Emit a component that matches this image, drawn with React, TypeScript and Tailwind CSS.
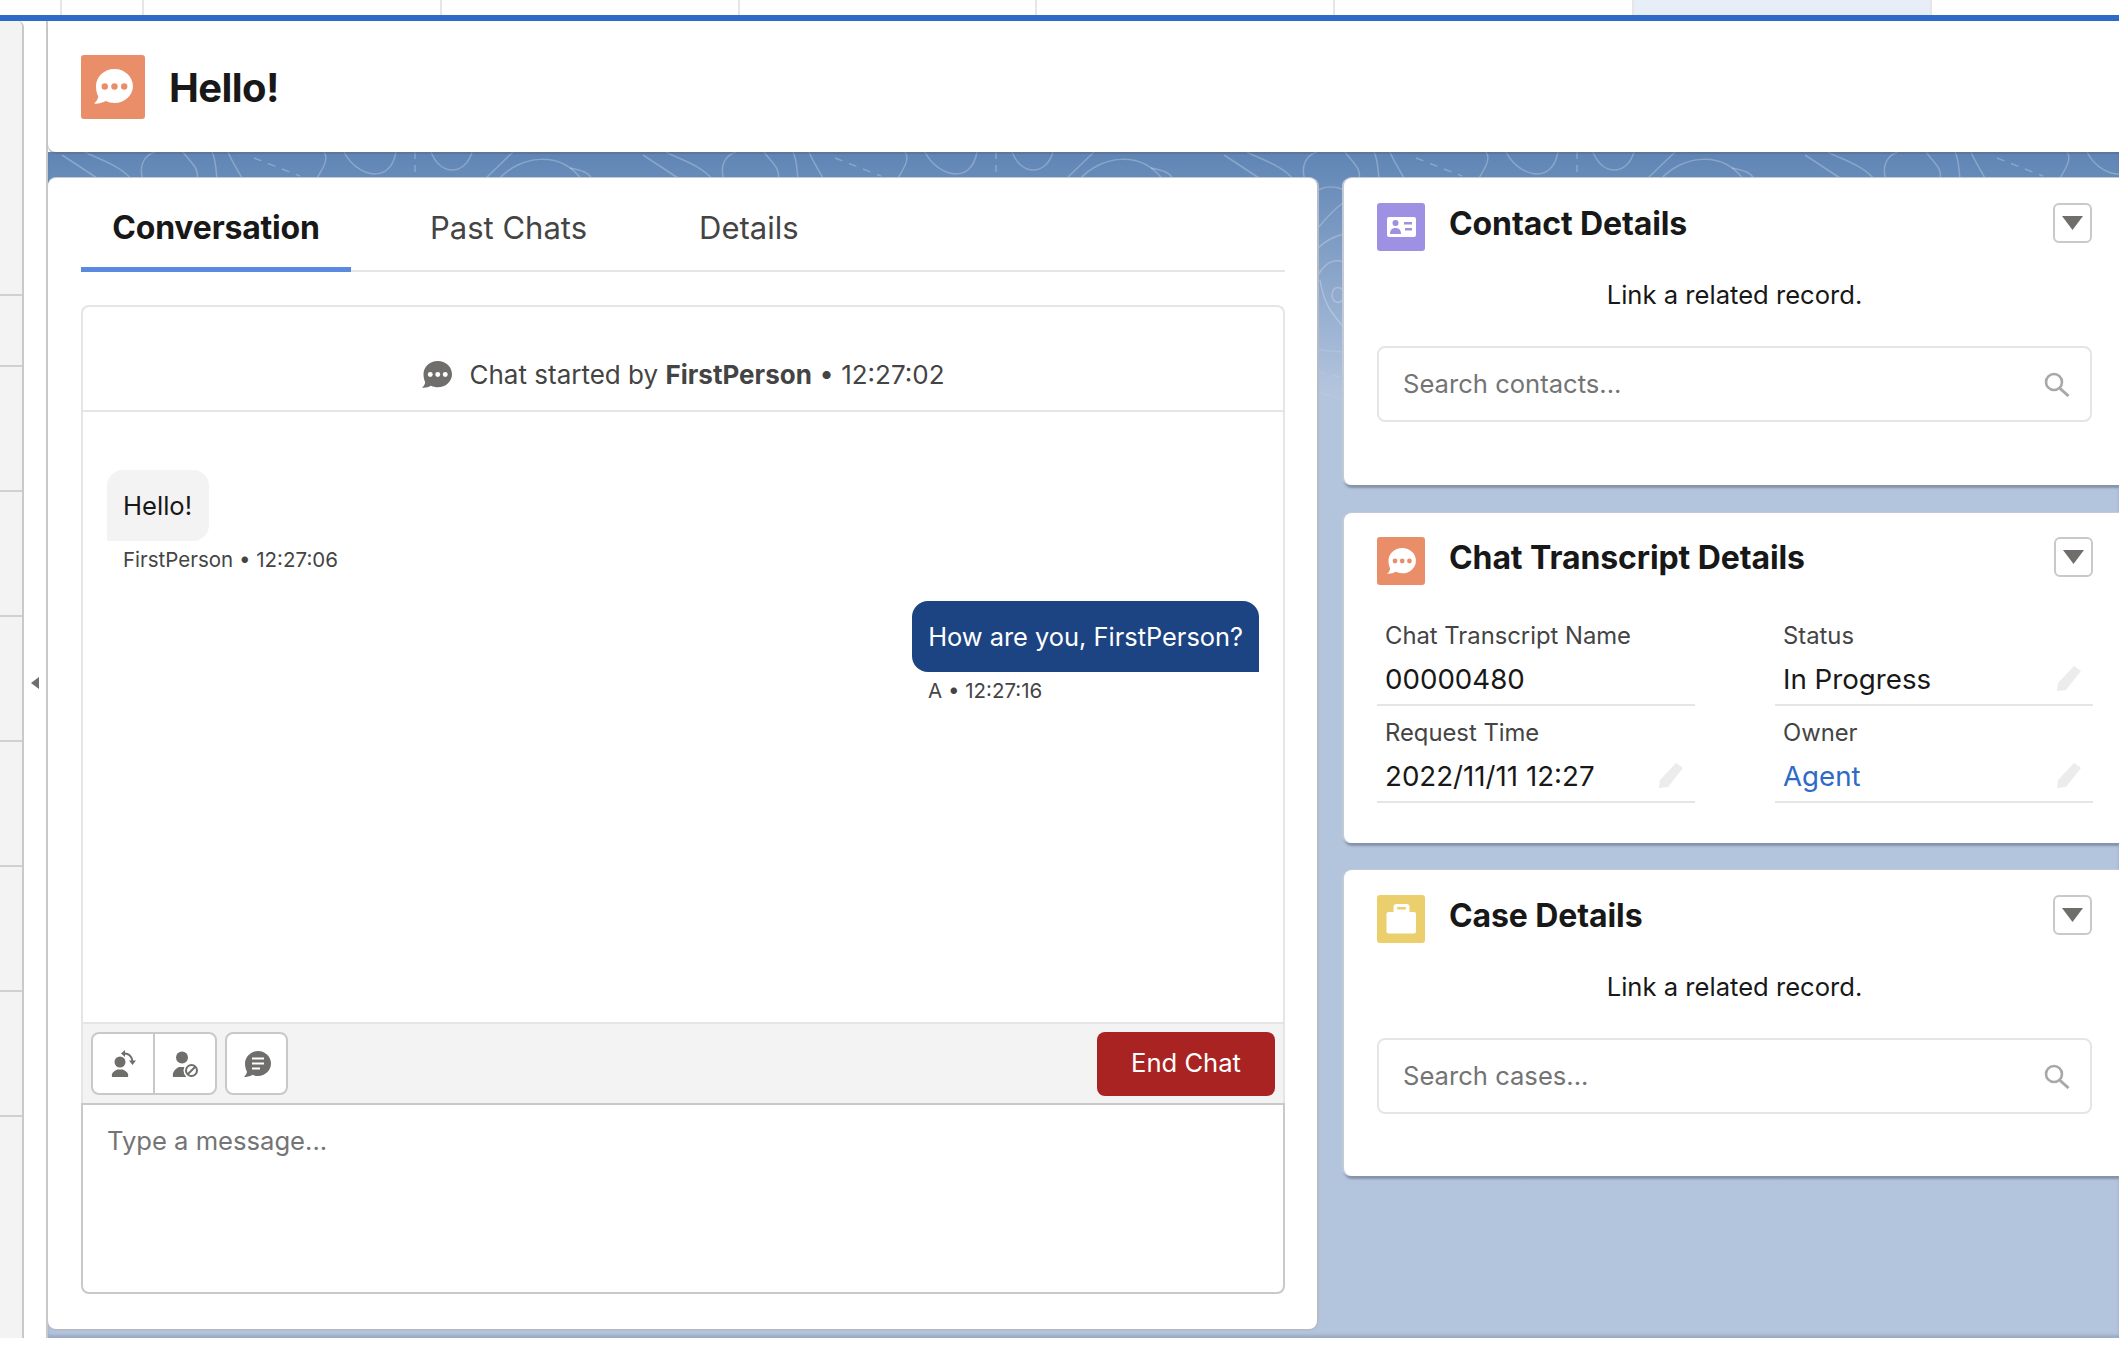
import React from 'react';

const topTabs = [
  'w-[62px]',
  'w-[82px]',
  'w-[298px]',
  'w-[298px]',
  'w-[297px]',
  'w-[298px]',
  'w-[299px]',
  'w-[298px] bg-[#e8eef8]',
];

const sideRows = ['h-[275px]', 'h-[71px]', 'h-[125px]', 'h-[125px]', 'h-[125px]', 'h-[125px]', 'h-[125px]', 'h-[125px]'];

const ChatBubble = ({ fill, dots, className }: { fill: string; dots: string; className: string }) => (
  <svg viewBox="0 0 40 36" className={className}>
    <path d="M21 0C31.500 0 40 7.800 40 17.500S31.500 35 21 35c-3.300 0-6.300-.7-9-2-3 1.800-7.500 3-12 2.600 2.300-1.700 4-4.400 4.300-7.200C2.800 25.300 2 21.500 2 17.500 2 7.800 10.500 0 21 0z" fill={fill} />
    <circle cx="11" cy="18" r="3.300" fill={dots} />
    <circle cx="21" cy="18" r="3.300" fill={dots} />
    <circle cx="31" cy="18" r="3.300" fill={dots} />
  </svg>
);

const ContactIcon = () => (
  <svg viewBox="0 0 48 48" className="w-12 h-12 shrink-0">
    <rect width="48" height="48" rx="3" fill="#9e90e2" />
    <rect x="10" y="14" width="29" height="20" rx="2" fill="#fff" />
    <circle cx="18.500" cy="20" r="3" fill="#9e90e2" />
    <path d="M13 31c0-4 2-6 5.500-6s5.500 2 5.500 6z" fill="#9e90e2" />
    <rect x="27" y="19" width="8" height="2.500" fill="#9e90e2" />
    <rect x="28" y="25" width="7" height="2.500" fill="#9e90e2" />
  </svg>
);

const CaseIcon = () => (
  <svg viewBox="0 0 48 48" className="w-12 h-12 shrink-0">
    <rect width="48" height="48" rx="3" fill="#ebcf6c" />
    <rect x="9.500" y="17" width="29.500" height="21.500" rx="2" fill="#fff" />
    <path d="M16.500 17v-5a3 3 0 0 1 3-3h10a3 3 0 0 1 3 3v5z" fill="#fff" />
    <rect x="20" y="12" width="9" height="2.500" rx="1" fill="#ebcf6c" />
  </svg>
);

const ChatTile = ({ big }: { big?: boolean }) => (
  <div className={`${big ? 'w-16 h-16' : 'w-12 h-12'} shrink-0 rounded-[3px] bg-[#e98e69] flex items-center justify-center`}>
    <ChatBubble fill="#fff" dots="#e98e69" className={big ? 'w-[39px] h-[35px]' : 'w-[29px] h-[26px]'} />
  </div>
);

const Pencil = () => (
  <svg viewBox="0 0 28 26" className="w-7 h-[26px] shrink-0 mr-[3px] -mt-[2px]">
    <path d="M20 1l7 5-15 19-9 1 1-8z" fill="#ececec" />
  </svg>
);

const SearchGlyph = () => (
  <svg viewBox="0 0 26 25" fill="none" className="w-[26px] h-[25px]">
    <circle cx="10" cy="10" r="8" stroke="#a8a8a8" strokeWidth="2.600" />
    <path d="M15.500 16l9 8" stroke="#a8a8a8" strokeWidth="3" />
  </svg>
);

const CaretButton = () => (
  <button className="w-[39px] h-10 shrink-0 rounded-md border-2 border-[#c9c9c9] bg-white flex items-center justify-center">
    <svg viewBox="0 0 21 14" className="w-[21px] h-[14px]">
      <path d="M0 0h21L10.500 14z" fill="#706e6b" />
    </svg>
  </button>
);

const CardHeader = ({ icon, title }: { icon: React.ReactNode; title: string }) => (
  <div className="flex items-start">
    {icon}
    <h2 className="ml-6 flex-1 pt-[1px] text-[32px] leading-[40px] font-bold text-[#181818] tracking-[-0.1px]">{title}</h2>
    <CaretButton />
  </div>
);

const LinkRecord = ({ placeholder }: { placeholder: string }) => (
  <>
    <p className="mt-6 h-10 text-center text-[25.600px] leading-10 text-[#181818]">Link a related record.</p>
    <div className="mt-[31px] h-[76px] rounded-lg border-2 border-[#e5e5e5] flex items-center justify-between pl-6 pr-5">
      <span className="text-[25.600px] text-[#747474]">{placeholder}</span>
      <SearchGlyph />
    </div>
  </>
);

const Field = ({ label, value, link, editable }: { label: string; value: string; link?: boolean; editable?: boolean }) => (
  <div className="h-[97px] border-b-2 border-[#e5e5e5] px-2 flex flex-col justify-end pb-[7px]">
    <div className="text-[23.800px] leading-8 text-[#444]">{label}</div>
    <div className="mt-[9px] flex items-center justify-between">
      <span className={`text-[27.700px] leading-9 ${link ? 'text-[#2e6bc4]' : 'text-[#181818]'}`}>{value}</span>
      {editable && <Pencil />}
    </div>
  </div>
);

// contour lines behind the cards, one tile of the strip
const contour = [
  'M62 155 L100 180',
  'M85 152 C100 160 120 165 132 180',
  'M143 180 C138 165 145 155 155 152',
  'M183 152 C190 162 200 168 197 180',
  'M212 152 C216 160 216 170 217 180',
  'M228 152 C232 162 238 170 243 180',
  'M324 152 C330 160 320 172 316 180',
  'M344 152 C356 176 390 186 396 152',
  'M431 152 C440 176 465 176 472 152',
  'M484 180 L513 152',
  'M498 180 C520 155 560 150 582 180',
  'M570 168 C580 170 590 172 592 180',
];

const Backdrop = () => (
  <svg className="absolute inset-0 w-full h-full" viewBox="0 0 2071 1186" preserveAspectRatio="none">
    <g transform="translate(-48 -152)" fill="none" stroke="#fff" strokeOpacity="0.25" strokeWidth="1.500">
      {[0, 581, 1162, 1743].map((dx) => (
        <g key={dx} transform={`translate(${dx} 0)`}>
          {contour.map((d) => (
            <path key={d} d={d} />
          ))}
          <path d="M254 158 L300 176" strokeDasharray="8 7" />
          <path d="M415 152 L415 180" strokeDasharray="7 6" />
        </g>
      ))}
      <path d="M1318 190 C1326 186 1336 186 1344 190" />
      <path d="M1318 228 C1326 218 1336 208 1344 202" />
      <path d="M1318 248 C1326 240 1336 236 1344 234" />
      <path d="M1318 275 C1328 258 1338 260 1344 262" />
      <path d="M1332 295 C1332 285 1344 285 1344 295 C1344 305 1332 305 1332 295z" />
      <path d="M1320 280 C1325 310 1335 315 1344 328" />
      <path d="M1318 350 L1344 352" strokeOpacity="0.12" />
      <path d="M1318 372 L1344 378" strokeOpacity="0.1" strokeDasharray="8 6" />
      <path d="M1318 392 L1344 400" strokeOpacity="0.08" />
    </g>
  </svg>
);

const ToolButtons = () => (
  <div className="flex gap-2">
    <div className="flex h-[63px] rounded-lg border-2 border-[#c9c9c9] bg-white">
      <button className="w-[62px] flex items-center justify-center border-r-2 border-[#c9c9c9]">
        <svg viewBox="0 0 28 28" className="w-7 h-7">
          <circle cx="11" cy="12" r="5.500" fill="#706e6b" />
          <path d="M3 27c-1-4 2-6 5.500-7.500h5c3.500 1.500 6.500 3.500 5.500 7.500z" fill="#706e6b" />
          <path d="M15 3.500C19 3 23 6 23.500 11" fill="none" stroke="#706e6b" strokeWidth="2" />
          <path d="M16 0l-4 3.500 4 3.500zM20 10.500h7l-3.500 4.500z" fill="#706e6b" />
        </svg>
      </button>
      <button className="w-[60px] flex items-center justify-center">
        <svg viewBox="0 0 28 28" className="w-7 h-7">
          <circle cx="11" cy="7.500" r="6" fill="#706e6b" />
          <path d="M2 27c-1-5 2-8 6-10h6c2 1 3 2 4 3l-3 7z" fill="#706e6b" />
          <circle cx="20.500" cy="20.500" r="8" fill="#fff" />
          <circle cx="20.500" cy="20.500" r="5.500" fill="none" stroke="#706e6b" strokeWidth="2" />
          <path d="M24.500 16.500l-8 8" stroke="#706e6b" strokeWidth="2" />
        </svg>
      </button>
    </div>
    <button className="w-[63px] h-[63px] rounded-lg border-2 border-[#c9c9c9] bg-white flex items-center justify-center">
      <svg viewBox="0 0 28 28" className="w-7 h-7">
        <path d="M15 1c7.200 0 13 5.600 13 12.500S22.200 26 15 26c-2 0-3.800-.4-5.500-1.200C7.500 26.300 4 27.300 1 27c1.500-1.300 2.700-3.300 3-5.200C2.800 19.500 2 16.600 2 13.500 2 6.600 7.800 1 15 1z" fill="#706e6b" />
        <path d="M9 8.500h12M9 13.500h12M9 18.500h8" stroke="#fff" strokeWidth="2" />
      </svg>
    </button>
  </div>
);

export default function App() {
  return (
    <div className="w-full h-screen overflow-hidden bg-white font-['Inter',sans-serif] flex flex-col">
      {/* browser style tab strip */}
      <div className="h-[15px] flex shrink-0">
        {topTabs.map((cls, i) => (
          <div key={i} className={`${cls} h-full border-r-2 border-[#e6e6e6]`} />
        ))}
      </div>
      <div className="h-[6px] bg-[#2e6bc6] shrink-0" />

      <div className="flex flex-1 min-h-0 pb-2">
        <aside className="w-6 shrink-0 bg-[#f3f3f3] border-r-2 border-[#c9c9c9] rounded-tr-md">
          {sideRows.map((h, i) => (
            <div key={i} className={`${h} border-b-2 border-[#d0d0d0]`} />
          ))}
        </aside>

        <div className="w-[22px] shrink-0 flex items-center justify-center pt-[6px]">
          <div className="w-0 h-0 border-y-[6px] border-y-transparent border-r-[8px] border-r-[#706e6b]" />
        </div>

        <main className="flex-1 min-w-0 border-l-2 border-[#c9c9c9] flex flex-col">
          <header className="h-[131px] shrink-0 bg-white rounded-bl-lg rounded-tl-lg flex items-center pl-[33px] shadow-[0_2px_1px_rgba(90,100,120,0.45)] relative z-10">
            <ChatTile big />
            <h1 className="ml-[24px] pt-[2px] text-[40px] font-bold text-[#181818] tracking-[-0.6px]">Hello!</h1>
          </header>

          <div className="relative flex-1 min-h-0 bg-gradient-to-b from-[#5f85b5] to-[#b3c4dd] to-20% pt-[26px] flex gap-[27px] shadow-[inset_0_-3px_3px_rgba(70,80,100,0.22)]">
            <Backdrop />

            {/* conversation card */}
            <section className="relative w-[1269px] h-[1151px] shrink-0 bg-white rounded-b-lg rounded-t-lg pl-[33px] pr-[32px] pb-[35px] flex flex-col shadow-[0_-1px_0_#c3cad6,0_2px_0_#b5bcc8,2px_0_0_#b5bcc8]">
              <nav className="h-[94px] shrink-0 flex border-b-2 border-[#e5e5e5]">
                <div className="w-[270px] h-[94px] border-b-[5px] border-[#5a8ae0] flex items-center justify-center pt-[10px]">
                  <span className="text-[32px] font-bold text-[#181818] tracking-[-0.2px]">Conversation</span>
                </div>
                <span className="ml-[79px] self-center pt-[8px] text-[31px] text-[#444]">Past Chats</span>
                <span className="ml-[112px] self-center pt-[8px] text-[31px] text-[#444]">Details</span>
              </nav>

              <div className="mt-[33px] flex-1 min-h-0 flex flex-col">
                <div className="flex-1 min-h-0 flex flex-col border-x-2 border-t-2 border-[#e5e5e5] rounded-t-lg">
                  <div className="h-[105px] shrink-0 border-b-2 border-[#e5e5e5] flex items-center justify-center pt-[32px] text-[26px] text-[#444]">
                    <ChatBubble fill="#706e6b" dots="#fff" className="w-[30px] h-[27px] mr-[18px]" />
                    <span>
                      Chat started by <b className="font-bold">FirstPerson</b> • 12:27:02
                    </span>
                  </div>

                  <div className="flex-1 min-h-0 pt-[58px] px-6 flex flex-col">
                    <div className="self-start w-[102px] h-[71px] bg-[#f3f3f3] rounded-2xl rounded-bl-none flex items-center pl-4 pt-[2px] text-[25.600px] text-[#181818]">
                      Hello!
                    </div>
                    <div className="ml-4 mt-[6px] h-[26px] text-[20.500px] leading-[26px] text-[#444]">FirstPerson • 12:27:06</div>
                    <div className="mt-7 self-end h-[71px] bg-[#1c4482] rounded-2xl rounded-br-none flex items-center px-4 pt-[2px] text-[25.400px] text-white">
                      How are you, FirstPerson?
                    </div>
                    <div className="self-start ml-[821px] mt-[6px] h-[26px] text-[20.500px] leading-[26px] text-[#444]">A • 12:27:16</div>
                  </div>

                  <div className="h-[81px] shrink-0 bg-[#f3f3f3] border-t-2 border-[#e5e5e5] flex items-center justify-between px-2">
                    <ToolButtons />
                    <button className="w-[178px] h-16 rounded-lg bg-[#a92322] text-white text-[25.600px]">End Chat</button>
                  </div>
                </div>

                <div className="h-[191px] shrink-0 border-2 border-[#c9c9c9] rounded-b-lg px-6 pt-[17px] text-[25.600px] text-[#747474]">
                  Type a message...
                </div>
              </div>
            </section>

            {/* details column */}
            <div className="relative flex-1 min-w-0 flex flex-col gap-7">
              <section className="h-[307px] shrink-0 bg-white rounded-l-lg pl-[33px] pr-[27px] pt-[25px] shadow-[0_-1px_0_#c3cad6,-2px_0_0_#c3cad6,0_3px_2px_rgba(90,100,120,0.5)]">
                <CardHeader icon={<ContactIcon />} title="Contact Details" />
                <LinkRecord placeholder="Search contacts..." />
              </section>

              <section className="h-[330px] shrink-0 bg-white rounded-l-lg pl-[33px] pr-[26px] pt-6 shadow-[0_-1px_0_#c3cad6,-2px_0_0_#c3cad6,0_3px_2px_rgba(90,100,120,0.5)]">
                <CardHeader icon={<ChatTile />} title="Chat Transcript Details" />
                <div className="grid grid-cols-[318px_318px] gap-x-[80px] mt-[24px]">
                  <Field label="Chat Transcript Name" value="00000480" />
                  <Field label="Status" value="In Progress" editable />
                  <Field label="Request Time" value="2022/11/11 12:27" editable />
                  <Field label="Owner" value="Agent" link editable />
                </div>
              </section>

              <section className="h-[306px] shrink-0 -mt-[1px] bg-white rounded-l-lg pl-[33px] pr-[27px] pt-[25px] shadow-[0_-1px_0_#c3cad6,-2px_0_0_#c3cad6,0_3px_2px_rgba(90,100,120,0.5)]">
                <CardHeader icon={<CaseIcon />} title="Case Details" />
                <LinkRecord placeholder="Search cases..." />
              </section>
            </div>
          </div>
        </main>
      </div>
    </div>
  );
}
